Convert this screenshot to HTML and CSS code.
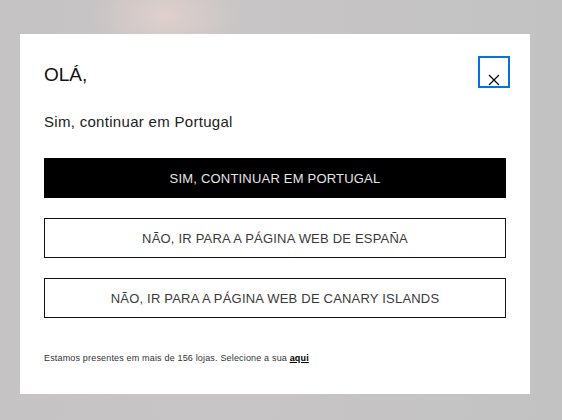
FILE: index.html
```html
<!DOCTYPE html>
<html lang="pt">
<head>
<meta charset="utf-8">
<link rel="stylesheet" href="styles.css">
</head>
<body>
<div class="modal">
  <div class="modal-head">
    <h1 class="title">OLÁ,</h1>
    <button class="close" aria-label="Fechar">
      <svg width="12" height="12" viewBox="0 0 12 12"><path d="M1 1 L11 11 M11 1 L1 11" stroke="#000" stroke-width="1.2" fill="none"/></svg>
    </button>
  </div>
  <p class="subtitle">Sim, continuar em Portugal</p>
  <div class="actions">
    <button class="btn btn-primary">SIM, CONTINUAR EM PORTUGAL</button>
    <button class="btn">NÃO, IR PARA A PÁGINA WEB DE ESPAÑA</button>
    <button class="btn">NÃO, IR PARA A PÁGINA WEB DE CANARY ISLANDS</button>
  </div>
  <p class="footer">Estamos presentes em mais de 156 lojas. Selecione a sua <a href="#">aqui</a></p>
</div>
</body>
</html>
```
FILE: styles.css
```css
html, body {
  margin: 0;
  height: 100%;
}
body {
  padding: 34px 0 0 20px;
  box-sizing: border-box;
  font-family: "Liberation Sans", Arial, sans-serif;
  background:
    radial-gradient(ellipse 75px 50px at 165px 16px, rgba(224, 208, 205, 0.95), rgba(224, 208, 205, 0) 100%),
    linear-gradient(90deg, #c5c3c3 0%, #c7c5c5 40%, #c3c2c2 100%);
  background-color: #c4c3c3;
  overflow: hidden;
}
.modal {
  width: 510px;
  height: 360px;
  background: #fff;
  padding: 22px 20px 0 24px;
  box-sizing: border-box;
}
.modal-head {
  display: flex;
  justify-content: space-between;
  align-items: flex-start;
}
.title {
  margin: 8px 0 0;
  font-size: 19px;
  font-weight: normal;
  color: #111;
  line-height: 22px;
}
.close {
  width: 32px;
  height: 32px;
  border: 2px solid #0a6fe0;
  background: #fff;
  padding: 0;
  display: flex;
  align-items: flex-end;
  justify-content: center;
  box-sizing: border-box;
}
.close svg {
  display: block;
}
.subtitle {
  margin: 24px 0 0;
  font-size: 15px;
  letter-spacing: 0.3px;
  color: #222;
  line-height: 20px;
}
.actions {
  margin-top: 26px;
  width: 462px;
  display: flex;
  flex-direction: column;
  gap: 20px;
}
.btn {
  height: 40px;
  border: 1px solid #111;
  background: #fff;
  color: #3a3a3a;
  font-family: "Liberation Sans", Arial, sans-serif;
  font-size: 13px;
  letter-spacing: 0.2px;
  padding: 0;
  cursor: pointer;
}
.btn-primary {
  background: #000;
  border-color: #000;
  color: #e6e6e6;
}
.footer {
  margin: 35px 0 0;
  font-size: 9px;
  letter-spacing: 0.17px;
  color: #333;
}
.footer a {
  color: #000;
  font-weight: bold;
  text-decoration: underline;
}
```
